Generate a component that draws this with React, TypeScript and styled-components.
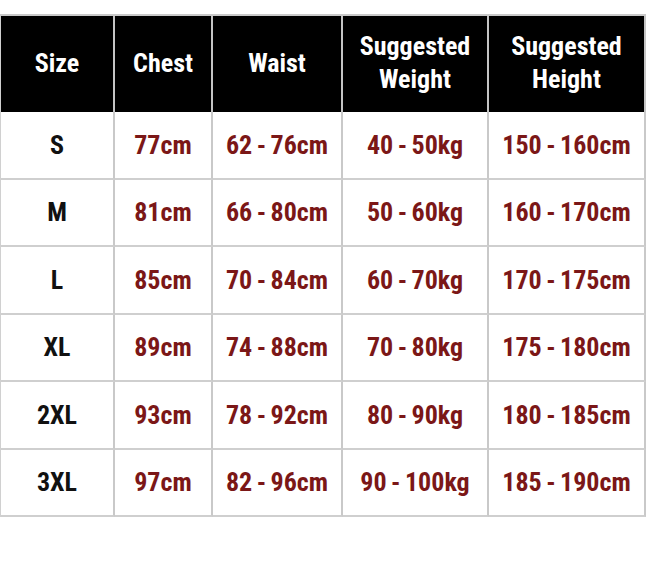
import React from "react";
import styled, { createGlobalStyle } from "styled-components";

const Global = createGlobalStyle`
  html, body { margin: 0; padding: 0; background: #ffffff; }
  body { width: 648px; height: 562px; overflow: hidden; }
`;

const Page = styled.div`
  padding-top: 14px;
  width: 648px;
`;

const Table = styled.div`
  display: grid;
  grid-template-columns: 114px 98px 130px 146px 157px;
  grid-template-rows: 96px repeat(6, 67.5px);
  width: 645px;
  border-top: 2px solid #c9c9c9;
  border-left: 1px solid #d0d0d0;
  font-family: "Liberation Sans Narrow", "Roboto Condensed", "DejaVu Sans Condensed", "Liberation Sans", sans-serif;
  font-weight: 700;
`;

const HeadCell = styled.div`
  background: #000;
  color: #fff;
  display: flex;
  align-items: center;
  justify-content: center;
  text-align: center;
  font-size: 26px;
  line-height: 33px;
  border-right: 2px solid #c4c4c4;
  padding-bottom: 2px;
`;

const Cell = styled.div<{ $dark?: boolean }>`
  display: flex;
  align-items: center;
  justify-content: center;
  font-size: 26px;
  word-spacing: -1.5px;
  color: ${(p) => (p.$dark ? "#111111" : "#7b1717")};
  border-right: 2px solid #c9c9c9;
  border-bottom: 2px solid #cfcfcf;
  white-space: nowrap;
`;

const rows = [
  ["S", "77cm", "62 - 76cm", "40 - 50kg", "150 - 160cm"],
  ["M", "81cm", "66 - 80cm", "50 - 60kg", "160 - 170cm"],
  ["L", "85cm", "70 - 84cm", "60 - 70kg", "170 - 175cm"],
  ["XL", "89cm", "74 - 88cm", "70 - 80kg", "175 - 180cm"],
  ["2XL", "93cm", "78 - 92cm", "80 - 90kg", "180 - 185cm"],
  ["3XL", "97cm", "82 - 96cm", "90 - 100kg", "185 - 190cm"],
];

export default function App() {
  return (
    <>
      <Global />
      <Page>
        <Table>
          <HeadCell>Size</HeadCell>
          <HeadCell>Chest</HeadCell>
          <HeadCell>Waist</HeadCell>
          <HeadCell>
            Suggested
            <br />
            Weight
          </HeadCell>
          <HeadCell>
            Suggested
            <br />
            Height
          </HeadCell>
          {rows.map((r) =>
            r.map((v, i) => (
              <Cell key={r[0] + i} $dark={i === 0}>
                {v}
              </Cell>
            ))
          )}
        </Table>
      </Page>
    </>
  );
}
